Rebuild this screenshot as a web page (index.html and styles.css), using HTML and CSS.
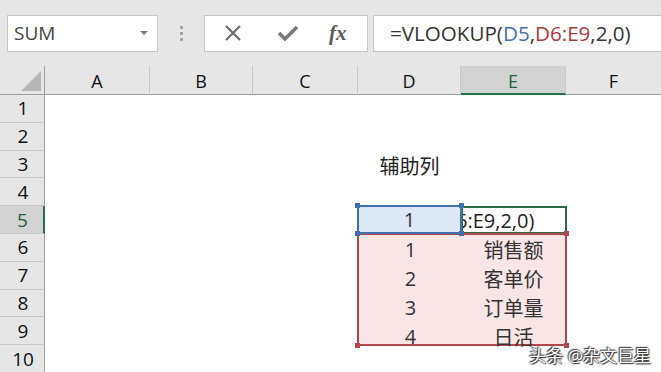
FILE: index.html
```html
<!DOCTYPE html>
<html lang="zh-CN">
<head>
  <meta charset="UTF-8">
  <title>VLOOKUP 辅助列</title>
  <link rel="stylesheet" href="styles.css">
</head>
<body>

  <div class="toolbar">
    <div class="namebox">
      <span>SUM</span>
      <span class="caret"></span>
    </div>
    <div class="grip"><i></i><i></i><i></i></div>
    <div class="fxbtns">
      <svg width="20" height="20" viewBox="0 0 20 20"><path d="M3 3 L17 17 M17 3 L3 17" stroke="#6b6b6b" stroke-width="2.2" fill="none"/></svg>
      <svg width="22" height="20" viewBox="0 0 22 20"><path d="M2 10 L8 16 L20 4" stroke="#7a7a7a" stroke-width="3.6" fill="none"/></svg>
      <span class="fx">fx</span>
    </div>
    <div class="formula">=VLOOKUP(<span class="ref-blue">D5</span>,<span class="ref-red">D6:E9</span>,2,0)</div>
  </div>

  <div class="sheet">
    <div class="corner"><span class="tri"></span></div>
    <div class="colhead">A</div>
    <div class="colhead">B</div>
    <div class="colhead">C</div>
    <div class="colhead">D</div>
    <div class="colhead active">E</div>
    <div class="colhead last">F</div>

    <div class="rowhead r1">1</div>
    <div class="rowhead r2">2</div>
    <div class="rowhead r3">3</div>
    <div class="rowhead r4">4</div>
    <div class="rowhead r5 active">5</div>
    <div class="rowhead r6">6</div>
    <div class="rowhead r7">7</div>
    <div class="rowhead r8">8</div>
    <div class="rowhead r9">9</div>
    <div class="rowhead r10">10</div>

    <div class="cell label">辅助列</div>

    <div class="cell lookup">
      1
      <i class="handle tl blue"></i><i class="handle tr blue"></i>
      <i class="handle bl blue"></i><i class="handle br blue"></i>
    </div>
    <div class="cell editing"><span>6:E9,2,0)</span></div>

    <div class="range">
      <div>1</div><div>销售额</div>
      <div>2</div><div>客单价</div>
      <div>3</div><div>订单量</div>
      <div>4</div><div>日活</div>
      <i class="handle tl red"></i><i class="handle tr red"></i>
      <i class="handle bl red"></i><i class="handle br red"></i>
    </div>

    <div class="watermark">头条 @杂文巨星</div>
  </div>

</body>
</html>
```

FILE: styles.css
```css
* {
  box-sizing: border-box;
}

body {
  margin: 0;
  width: 661px;
  height: 372px;
  overflow: hidden;
  background: #fff;
  font-family: "Open Sans", "Noto Sans", "Noto Sans CJK SC", sans-serif;
  color: #222;
}

/* formula bar */
.toolbar {
  height: 66px;
  background: #e6e6e6;
  display: flex;
  align-items: center;
  padding: 0 0 0 7px;
}

.namebox {
  width: 151px;
  height: 37px;
  background: #fff;
  border: 1px solid #c6c6c6;
  display: flex;
  align-items: center;
  justify-content: space-between;
  padding: 0 9px 0 6px;
  font-size: 19px;
  color: #444;
}

.caret {
  width: 0;
  height: 0;
  border-left: 4px solid transparent;
  border-right: 4px solid transparent;
  border-top: 4px solid #777;
}

.grip {
  width: 46px;
  display: flex;
  flex-direction: column;
  align-items: center;
  gap: 3px;
}

.grip i {
  width: 3px;
  height: 3px;
  background: #a6a6a6;
}

.fxbtns {
  width: 164px;
  height: 37px;
  background: #fff;
  border: 1px solid #c6c6c6;
  display: flex;
  align-items: center;
  padding-left: 18px;
  gap: 34px;
}

.fx {
  font-family: "Liberation Serif", serif;
  font-style: italic;
  font-weight: bold;
  font-size: 21px;
  color: #5a5a5a;
  margin-left: -4px;
}

.formula {
  flex: 1;
  height: 37px;
  margin-left: 5px;
  background: #fff;
  border: 1px solid #c6c6c6;
  border-right: none;
  display: flex;
  align-items: center;
  padding-left: 16px;
  font-size: 20.6px;
  color: #333;
}

.ref-blue {
  color: #3f72b5;
}

.ref-red {
  color: #b03a3e;
}

/* grid */
.sheet {
  position: relative;
  display: grid;
  grid-template-columns: 45px 105px 103px 105px 103px 105px 1fr;
  grid-template-rows: 29px repeat(10, 27.8px);
}

.corner {
  background: #e6e6e6;
  border-right: 1px solid #9e9e9e;
  border-bottom: 1px solid #9e9e9e;
  position: relative;
}

.tri {
  position: absolute;
  right: 3px;
  bottom: 3px;
  width: 0;
  height: 0;
  border-left: 20px solid transparent;
  border-bottom: 20px solid #b5b5b5;
}

.colhead {
  background: #e6e6e6;
  border-bottom: 1px solid #9e9e9e;
  border-right: 1px solid #c8c8c8;
  display: flex;
  align-items: center;
  justify-content: center;
  font-size: 18px;
  color: #111;
  padding-top: 2px;
}

.colhead.last {
  border-right: none;
}

.colhead.active {
  background: #d2d2d2;
  color: #1e5e3a;
  border-bottom: 2px solid #217346;
}

.rowhead {
  grid-column: 1;
  background: #e6e6e6;
  border-right: 1px solid #9e9e9e;
  border-bottom: 1px solid #c8c8c8;
  display: flex;
  align-items: center;
  justify-content: center;
  font-size: 19px;
  color: #111;
  padding-left: 2px;
}

.rowhead.active {
  background: #d2d2d2;
  color: #1e5e3a;
  border-right: 2px solid #217346;
}

.r1 { grid-row: 2; }
.r2 { grid-row: 3; }
.r3 { grid-row: 4; }
.r4 { grid-row: 5; }
.r5 { grid-row: 6; }
.r6 { grid-row: 7; }
.r7 { grid-row: 8; }
.r8 { grid-row: 9; }
.r9 { grid-row: 10; }
.r10 { grid-row: 11; }

.cell {
  display: flex;
  align-items: center;
  justify-content: center;
  font-size: 20px;
}

.label {
  grid-column: 5;
  grid-row: 4;
  color: #222;
  padding-top: 2px;
}

.lookup {
  grid-column: 5;
  grid-row: 6;
  position: relative;
  background: #dde8f5;
  border: 2px solid #3f6fb0;
  margin: -1px -1px 0 -1px;
  color: #333;
  z-index: 2;
}

.editing {
  grid-column: 6;
  grid-row: 6;
  border: 2px solid #2e6b45;
  margin: 0 -1px 0 0;
  justify-content: flex-start;
  overflow: hidden;
  white-space: nowrap;
  color: #222;
}

.editing span {
  margin-left: -7px;
  flex-shrink: 0;
}

.range {
  grid-column: 5 / 7;
  grid-row: 7 / 11;
  position: relative;
  background: #f8e5e5;
  border: 2px solid #b3474c;
  margin: -1px -1px -1px -1px;
  display: grid;
  grid-template-columns: 1fr 1fr;
  grid-template-rows: repeat(4, 1fr);
  font-size: 20px;
  color: #333;
  z-index: 1;
}

.range div {
  display: flex;
  align-items: center;
  justify-content: center;
}

.handle {
  position: absolute;
  width: 5px;
  height: 5px;
}

.handle.blue { background: #3f6fb0; }
.handle.red { background: #b3474c; }

.tl { left: -4px; top: -4px; }
.tr { right: -4px; top: -4px; }
.bl { left: -4px; bottom: -4px; }
.br { right: -4px; bottom: -4px; }

.watermark {
  position: absolute;
  right: 10px;
  bottom: 6px;
  font-size: 17px;
  color: #fff;
  z-index: 3;
  text-shadow: 0 0 2px #333, 1px 1px 1px #333, -1px -1px 1px #333;
}
```
